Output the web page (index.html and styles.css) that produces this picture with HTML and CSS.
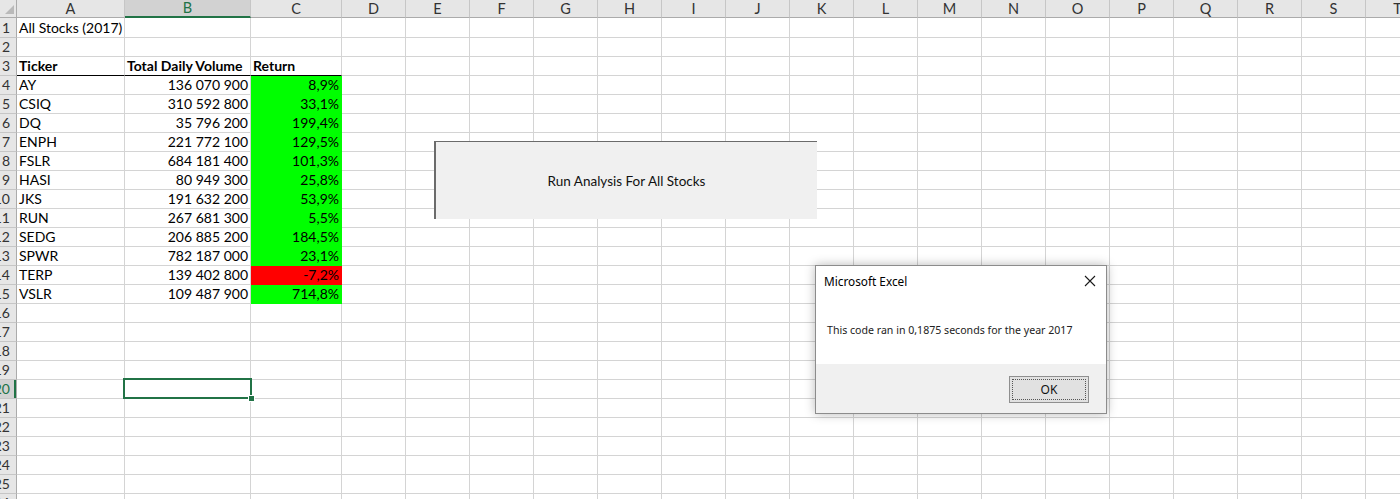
FILE: index.html
```html
<!DOCTYPE html>
<html>
<head>
<meta charset="utf-8">
<link rel="stylesheet" href="styles.css">
</head>
<body>
<div class="sheet">
  <div class="row head">
    <div class="corner"><span class="tri"></span></div>
    <div class="ch a">A</div><div class="ch b on">B</div><div class="ch c">C</div>
    <div class="ch">D</div><div class="ch">E</div><div class="ch">F</div><div class="ch">G</div>
    <div class="ch">H</div><div class="ch">I</div><div class="ch">J</div><div class="ch">K</div>
    <div class="ch">L</div><div class="ch">M</div><div class="ch">N</div><div class="ch">O</div>
    <div class="ch">P</div><div class="ch">Q</div><div class="ch">R</div><div class="ch">S</div>
    <div class="ch">T</div>
  </div>
  <div class="row first"><div class="rh"><span>1</span></div><div class="cell a">All Stocks (2017)</div><div class="cell b"></div><div class="cell c"></div><div class="rest"></div></div>
  <div class="row"><div class="rh"><span>2</span></div><div class="cell a"></div><div class="cell b"></div><div class="cell c"></div><div class="rest"></div></div>
  <div class="row"><div class="rh"><span>3</span></div><div class="cell a bold under">Ticker</div><div class="cell b bold under left">Total Daily Volume</div><div class="cell c bold under left">Return</div><div class="rest"></div></div>
  <div class="row"><div class="rh"><span>4</span></div><div class="cell a">AY</div><div class="cell b">136 070 900</div><div class="cell c pos">8,9%</div><div class="rest"></div></div>
  <div class="row"><div class="rh"><span>5</span></div><div class="cell a">CSIQ</div><div class="cell b">310 592 800</div><div class="cell c pos">33,1%</div><div class="rest"></div></div>
  <div class="row"><div class="rh"><span>6</span></div><div class="cell a">DQ</div><div class="cell b">35 796 200</div><div class="cell c pos">199,4%</div><div class="rest"></div></div>
  <div class="row"><div class="rh"><span>7</span></div><div class="cell a">ENPH</div><div class="cell b">221 772 100</div><div class="cell c pos">129,5%</div><div class="rest"></div></div>
  <div class="row"><div class="rh"><span>8</span></div><div class="cell a">FSLR</div><div class="cell b">684 181 400</div><div class="cell c pos">101,3%</div><div class="rest"></div></div>
  <div class="row"><div class="rh"><span>9</span></div><div class="cell a">HASI</div><div class="cell b">80 949 300</div><div class="cell c pos">25,8%</div><div class="rest"></div></div>
  <div class="row"><div class="rh"><span>10</span></div><div class="cell a">JKS</div><div class="cell b">191 632 200</div><div class="cell c pos">53,9%</div><div class="rest"></div></div>
  <div class="row"><div class="rh"><span>11</span></div><div class="cell a">RUN</div><div class="cell b">267 681 300</div><div class="cell c pos">5,5%</div><div class="rest"></div></div>
  <div class="row"><div class="rh"><span>12</span></div><div class="cell a">SEDG</div><div class="cell b">206 885 200</div><div class="cell c pos">184,5%</div><div class="rest"></div></div>
  <div class="row"><div class="rh"><span>13</span></div><div class="cell a">SPWR</div><div class="cell b">782 187 000</div><div class="cell c pos">23,1%</div><div class="rest"></div></div>
  <div class="row"><div class="rh"><span>14</span></div><div class="cell a">TERP</div><div class="cell b">139 402 800</div><div class="cell c neg">-7,2%</div><div class="rest"></div></div>
  <div class="row"><div class="rh"><span>15</span></div><div class="cell a">VSLR</div><div class="cell b">109 487 900</div><div class="cell c pos">714,8%</div><div class="rest"></div></div>
  <div class="row"><div class="rh"><span>16</span></div><div class="cell a"></div><div class="cell b"></div><div class="cell c"></div><div class="rest"></div></div>
  <div class="row"><div class="rh"><span>17</span></div><div class="cell a"></div><div class="cell b"></div><div class="cell c"></div><div class="rest"></div></div>
  <div class="row"><div class="rh"><span>18</span></div><div class="cell a"></div><div class="cell b"></div><div class="cell c"></div><div class="rest"></div></div>
  <div class="row"><div class="rh"><span>19</span></div><div class="cell a"></div><div class="cell b"></div><div class="cell c"></div><div class="rest"></div></div>
  <div class="row"><div class="rh on"><span>20</span></div><div class="cell a"></div><div class="cell b"></div><div class="cell c"></div><div class="rest"></div></div>
  <div class="row"><div class="rh"><span>21</span></div><div class="cell a"></div><div class="cell b"></div><div class="cell c"></div><div class="rest"></div></div>
  <div class="row"><div class="rh"><span>22</span></div><div class="cell a"></div><div class="cell b"></div><div class="cell c"></div><div class="rest"></div></div>
  <div class="row"><div class="rh"><span>23</span></div><div class="cell a"></div><div class="cell b"></div><div class="cell c"></div><div class="rest"></div></div>
  <div class="row"><div class="rh"><span>24</span></div><div class="cell a"></div><div class="cell b"></div><div class="cell c"></div><div class="rest"></div></div>
  <div class="row"><div class="rh"><span>25</span></div><div class="cell a"></div><div class="cell b"></div><div class="cell c"></div><div class="rest"></div></div>
  <div class="row"><div class="rh"><span>26</span></div><div class="cell a"></div><div class="cell b"></div><div class="cell c"></div><div class="rest"></div></div>

  <div class="selection"><span class="handle"></span></div>

  <div class="macro-btn">Run Analysis For All Stocks</div>

  <div class="dialog">
    <div class="dlg-title">
      <span>Microsoft Excel</span>
      <svg class="dlg-close" width="12" height="12" viewBox="0 0 12 12"><path d="M1 1 L11 11 M11 1 L1 11" stroke="#1a1a1a" stroke-width="1.1" fill="none"/></svg>
    </div>
    <div class="dlg-body">This code ran in 0,1875 seconds for the year 2017</div>
    <div class="dlg-foot">
      <div class="dlg-ok"><span>OK</span></div>
    </div>
  </div>
</div>
</body>
</html>
```

FILE: styles.css
```css
html, body {
  margin: 0;
  padding: 0;
  background: #ffffff;
  overflow: hidden;
}
.sheet {
  position: relative;
  width: 1400px;
  height: 499px;
  overflow: hidden;
  font-family: Lato, "Noto Sans", "Liberation Sans", sans-serif;
  font-size: 14px;
  color: #000;
}
.row {
  display: flex;
  height: 19px;
  flex-shrink: 0;
}
.row.first { height: 20px; }
.row.head {
  height: 18px;
  background: #e6e6e6;
}
.corner {
  position: relative;
  flex: 0 0 17px;
  box-sizing: border-box;
  border-right: 1px solid #ababab;
  border-bottom: 1px solid #ababab;
}
.tri {
  position: absolute;
  left: 5px;
  top: 5px;
  width: 0;
  height: 0;
  border-left: 9px solid transparent;
  border-bottom: 9px solid #b9b9b9;
}
.ch {
  flex: 0 0 64px;
  box-sizing: border-box;
  border-right: 1px solid #c6c6c6;
  border-bottom: 1px solid #ababab;
  text-align: center;
  line-height: 17px;
  font-size: 14.5px;
  color: #333;
}
.ch.a { flex-basis: 108px; }
.ch.b { flex-basis: 126px; }
.ch.c { flex-basis: 91px; }
.ch.on {
  background: #d2d2d2;
  color: #217346;
  border-bottom: 2px solid #217346;
  line-height: 16px;
}
.rh {
  flex: 0 0 17px;
  box-sizing: border-box;
  background: #e6e6e6;
  border-right: 1px solid #ababab;
  border-bottom: 1px solid #c6c6c6;
  display: flex;
  justify-content: flex-end;
  align-items: flex-end;
  overflow: hidden;
  padding-right: 6px;
  color: #333;
  font-size: 14px;
  line-height: 18px;
  white-space: nowrap;
}
.rh span { flex-shrink: 0; }
.rh.on {
  background: #d2d2d2;
  color: #217346;
  box-shadow: inset -2px 0 0 #217346;
}
.cell {
  box-sizing: border-box;
  border-right: 1px solid #d4d4d4;
  border-bottom: 1px solid #d4d4d4;
  white-space: nowrap;
  overflow: visible;
  line-height: 18px;
  padding: 0 2px;
  display: flex;
  align-items: flex-end;
}
.cell.a { flex: 0 0 108px; }
.cell.b { flex: 0 0 126px; justify-content: flex-end; }
.cell.c { flex: 0 0 91px; justify-content: flex-end; }
.cell.left { justify-content: flex-start; }
.cell.bold { font-weight: 700; }
.cell.under { border-bottom-color: #000; }
.cell.pos { background: #00ff00; border-color: #00ff00; }
.cell.neg { background: #ff0000; border-color: #ff0000; }
.rest {
  flex: 1 1 auto;
  box-sizing: border-box;
  border-bottom: 1px solid #d4d4d4;
  background: repeating-linear-gradient(to right, transparent 0, transparent 63px, #d4d4d4 63px, #d4d4d4 64px);
}

.selection {
  position: absolute;
  left: 123px;
  top: 378px;
  width: 129px;
  height: 21px;
  box-sizing: border-box;
  border: 2px solid #217346;
}
.handle {
  position: absolute;
  right: -5px;
  bottom: -5px;
  width: 5px;
  height: 5px;
  background: #217346;
  border: 1px solid #fff;
}

.macro-btn {
  position: absolute;
  left: 434px;
  top: 141px;
  width: 383px;
  height: 78px;
  box-sizing: border-box;
  background: #f0f0f0;
  border-left: 2px solid #6b6b6b;
  border-top: 1px solid #6b6b6b;
  display: flex;
  align-items: center;
  justify-content: center;
  font-size: 13.5px;
  color: #111;
  padding-top: 1px;
}

.dialog {
  position: absolute;
  left: 815px;
  top: 265px;
  width: 292px;
  height: 149px;
  box-sizing: border-box;
  background: #fff;
  border: 1px solid #8c8c8c;
  box-shadow: 0 0 10px rgba(0, 0, 0, 0.28);
  display: flex;
  flex-direction: column;
  font-family: "Noto Sans", "Open Sans", "Liberation Sans", sans-serif;
  color: #000;
}
.dlg-title {
  height: 30px;
  display: flex;
  align-items: center;
  justify-content: space-between;
  padding: 0 10px 0 8px;
  font-size: 11.8px;
}
.dlg-close { display: block; }
.dlg-body {
  flex: 1 1 auto;
  padding: 27px 0 0 11px;
  font-size: 10.6px;
  color: #222;
}
.dlg-foot {
  height: 49px;
  background: #f0f0f0;
  display: flex;
  justify-content: flex-end;
  align-items: flex-start;
  padding: 12px 17px 0 0;
  box-sizing: border-box;
}
.dlg-ok {
  width: 80px;
  height: 27px;
  box-sizing: border-box;
  border: 1px solid #8f8f8f;
  background: #e1e1e1;
  padding: 2px;
  display: flex;
}
.dlg-ok span {
  flex: 1 1 auto;
  border: 1px dotted #555;
  display: flex;
  align-items: center;
  justify-content: center;
  font-size: 12px;
  color: #111;
}
```
